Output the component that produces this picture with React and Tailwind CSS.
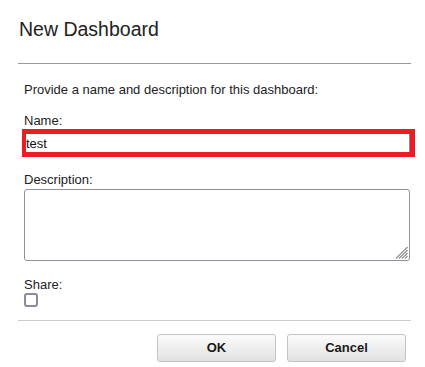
export default function App() {
  return (
    <div className="w-[425px] h-[367px] bg-white overflow-hidden text-[#222]" style={{ fontFamily: '"Liberation Sans", Arial, sans-serif' }}>
      <div className="mt-[18px] pl-[19px] h-[23px] leading-[23px] text-[19.5px]">New Dashboard</div>
      <div className="mt-[22px] ml-[18px] w-[393px] h-px bg-[#9a9a9a]" />
      <div className="mt-[18px] ml-[24px] text-[13px] leading-[15px]">Provide a name and description for this dashboard:</div>
      <div className="mt-[16px] ml-[24px] text-[13px] leading-[15px]">Name:</div>
      <div className="mt-[1px] ml-[22px] w-[393px] h-[28px] border-[5px] border-l-4 border-[#ed1c24] bg-white">
        <input
          className="block w-full h-full border-r border-[#8a8a8a] bg-white outline-none text-[13px] text-[#111] p-0"
          defaultValue="test"
          style={{ fontFamily: '"Liberation Sans", Arial, sans-serif' }}
        />
      </div>
      <div className="mt-[15px] ml-[24px] text-[13px] leading-[15px]">Description:</div>
      <div className="relative mt-[2px] ml-[24px] w-[386px] h-[72px]">
        <textarea
          className="block w-full h-full border border-[#8f8f9d] rounded-[3px] bg-white outline-none resize-none"
        />
        <svg className="absolute right-[2px] bottom-[2px]" width="14" height="14" viewBox="0 0 14 14">
          <g stroke="#8a8a8a" strokeWidth="1.1">
            <line x1="2" y1="13.5" x2="13.5" y2="2" />
            <line x1="5" y1="13.5" x2="13.5" y2="5" />
            <line x1="8" y1="13.5" x2="13.5" y2="8" />
            <line x1="11" y1="13.5" x2="13.5" y2="11" />
          </g>
        </svg>
      </div>
      <div className="mt-[16px] ml-[24px] text-[13px] leading-[15px]">Share:</div>
      <div className="mt-[1px] ml-[24px] w-[14px] h-[14px] border-2 border-[#8a8a9c] rounded-[3px] bg-white" />
      <div className="mt-[13px] ml-[18px] w-[393px] h-px bg-[#cccccc]" />
      <div className="mt-[13px] flex justify-end gap-[11px] pr-[19px]">
        <button className="w-[119px] h-[28px] rounded-[3px] border border-[#c4c4c4] bg-gradient-to-b from-[#fbfbfb] to-[#e2e2e2] text-[13px] font-bold text-[#1a1a1a]">OK</button>
        <button className="w-[119px] h-[28px] rounded-[3px] border border-[#c4c4c4] bg-gradient-to-b from-[#fbfbfb] to-[#e2e2e2] text-[13px] font-bold text-[#1a1a1a]">Cancel</button>
      </div>
    </div>
  );
}
